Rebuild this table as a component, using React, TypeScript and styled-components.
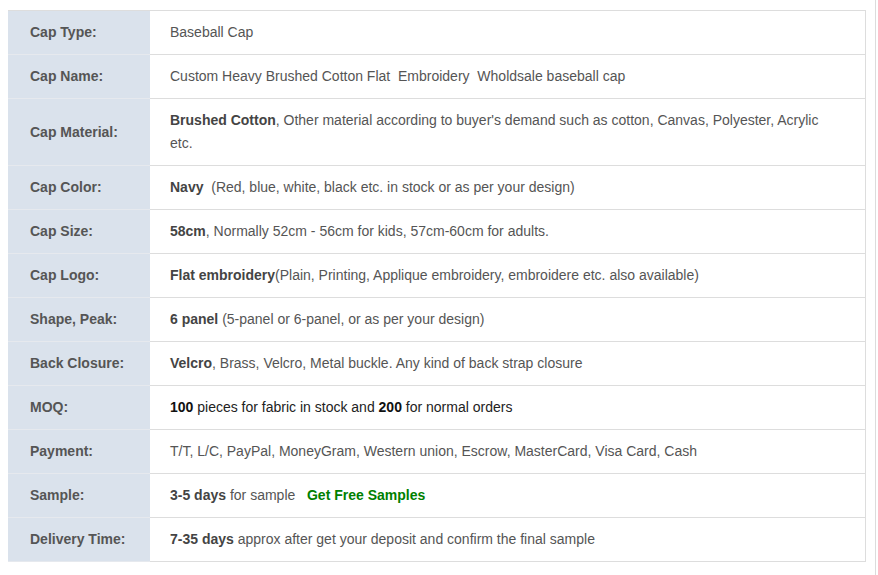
import React from "react";
import styled, { createGlobalStyle } from "styled-components";

const GlobalStyle = createGlobalStyle`
  html, body {
    margin: 0;
    padding: 0;
    background: #fff;
  }
  body {
    font-family: "Liberation Sans", Arial, sans-serif;
  }
`;

const Page = styled.div`
  width: 876px;
  min-height: 575px;
  box-sizing: border-box;
  border-right: 1px solid #dcdcdc;
  padding: 10px 0 0 8px;
`;

const SpecTable = styled.table`
  width: 858px;
  border-collapse: collapse;
  table-layout: fixed;
  font-size: 14px;
  line-height: 23px;
  border: 1px solid #dddddd;
  border-left-color: #dae2ec;
`;

const LabelCell = styled.td`
  width: 120px;
  padding: 10px 0 10px 21px;
  background: #dae2ec;
  color: #555555;
  font-weight: bold;
  border-bottom: 1px solid #e6e9ee;
  vertical-align: middle;
`;

const ValueCell = styled.td<{ $dark?: boolean }>`
  padding: 10px 30px 10px 20px;
  color: ${(p) => (p.$dark ? "#222222" : "#555555")};
  border-bottom: 1px solid #dddddd;
  vertical-align: middle;

  b {
    color: ${(p) => (p.$dark ? "#111111" : "#444444")};
  }
`;

const FreeLink = styled.span`
  color: #008000;
  font-weight: bold;
`;

type Row = { label: string; value: React.ReactNode; dark?: boolean };

const rows: Row[] = [
  { label: "Cap Type:", value: "Baseball Cap" },
  {
    label: "Cap Name:",
    value: "Custom Heavy Brushed Cotton Flat\u00a0 Embroidery\u00a0 Wholdsale baseball cap",
  },
  {
    label: "Cap Material:",
    value: (
      <>
        <b>Brushed Cotton</b>, Other material according to buyer's demand such as
        cotton, Canvas, Polyester, Acrylic etc.
      </>
    ),
  },
  {
    label: "Cap Color:",
    value: (
      <>
        <b>Navy</b>&nbsp; (Red, blue, white, black etc. in stock or as per your design)
      </>
    ),
  },
  {
    label: "Cap Size:",
    value: (
      <>
        <b>58cm</b>, Normally 52cm - 56cm for kids, 57cm-60cm for adults.
      </>
    ),
  },
  {
    label: "Cap Logo:",
    value: (
      <>
        <b>Flat embroidery</b>(Plain, Printing, Applique embroidery, embroidere etc. also
        available)
      </>
    ),
  },
  {
    label: "Shape, Peak:",
    value: (
      <>
        <b>6 panel</b> (5-panel or 6-panel, or as per your design)
      </>
    ),
  },
  {
    label: "Back Closure:",
    value: (
      <>
        <b>Velcro</b>, Brass, Velcro, Metal buckle. Any kind of back strap closure
      </>
    ),
  },
  {
    label: "MOQ:",
    dark: true,
    value: (
      <>
        <b>100</b> pieces for fabric in stock and <b>200</b> for normal orders
      </>
    ),
  },
  {
    label: "Payment:",
    value: "T/T, L/C, PayPal, MoneyGram, Western union, Escrow, MasterCard, Visa Card, Cash",
  },
  {
    label: "Sample:",
    value: (
      <>
        <b>3-5 days</b> for sample&nbsp;&nbsp; <FreeLink>Get Free Samples</FreeLink>
      </>
    ),
  },
  {
    label: "Delivery Time:",
    value: (
      <>
        <b>7-35 days</b> approx after get your deposit and confirm the final sample
      </>
    ),
  },
];

export default function App() {
  return (
    <>
      <GlobalStyle />
      <Page>
        <SpecTable>
          <tbody>
            {rows.map((r) => (
              <tr key={r.label}>
                <LabelCell>{r.label}</LabelCell>
                <ValueCell $dark={r.dark}>{r.value}</ValueCell>
              </tr>
            ))}
          </tbody>
        </SpecTable>
      </Page>
    </>
  );
}
